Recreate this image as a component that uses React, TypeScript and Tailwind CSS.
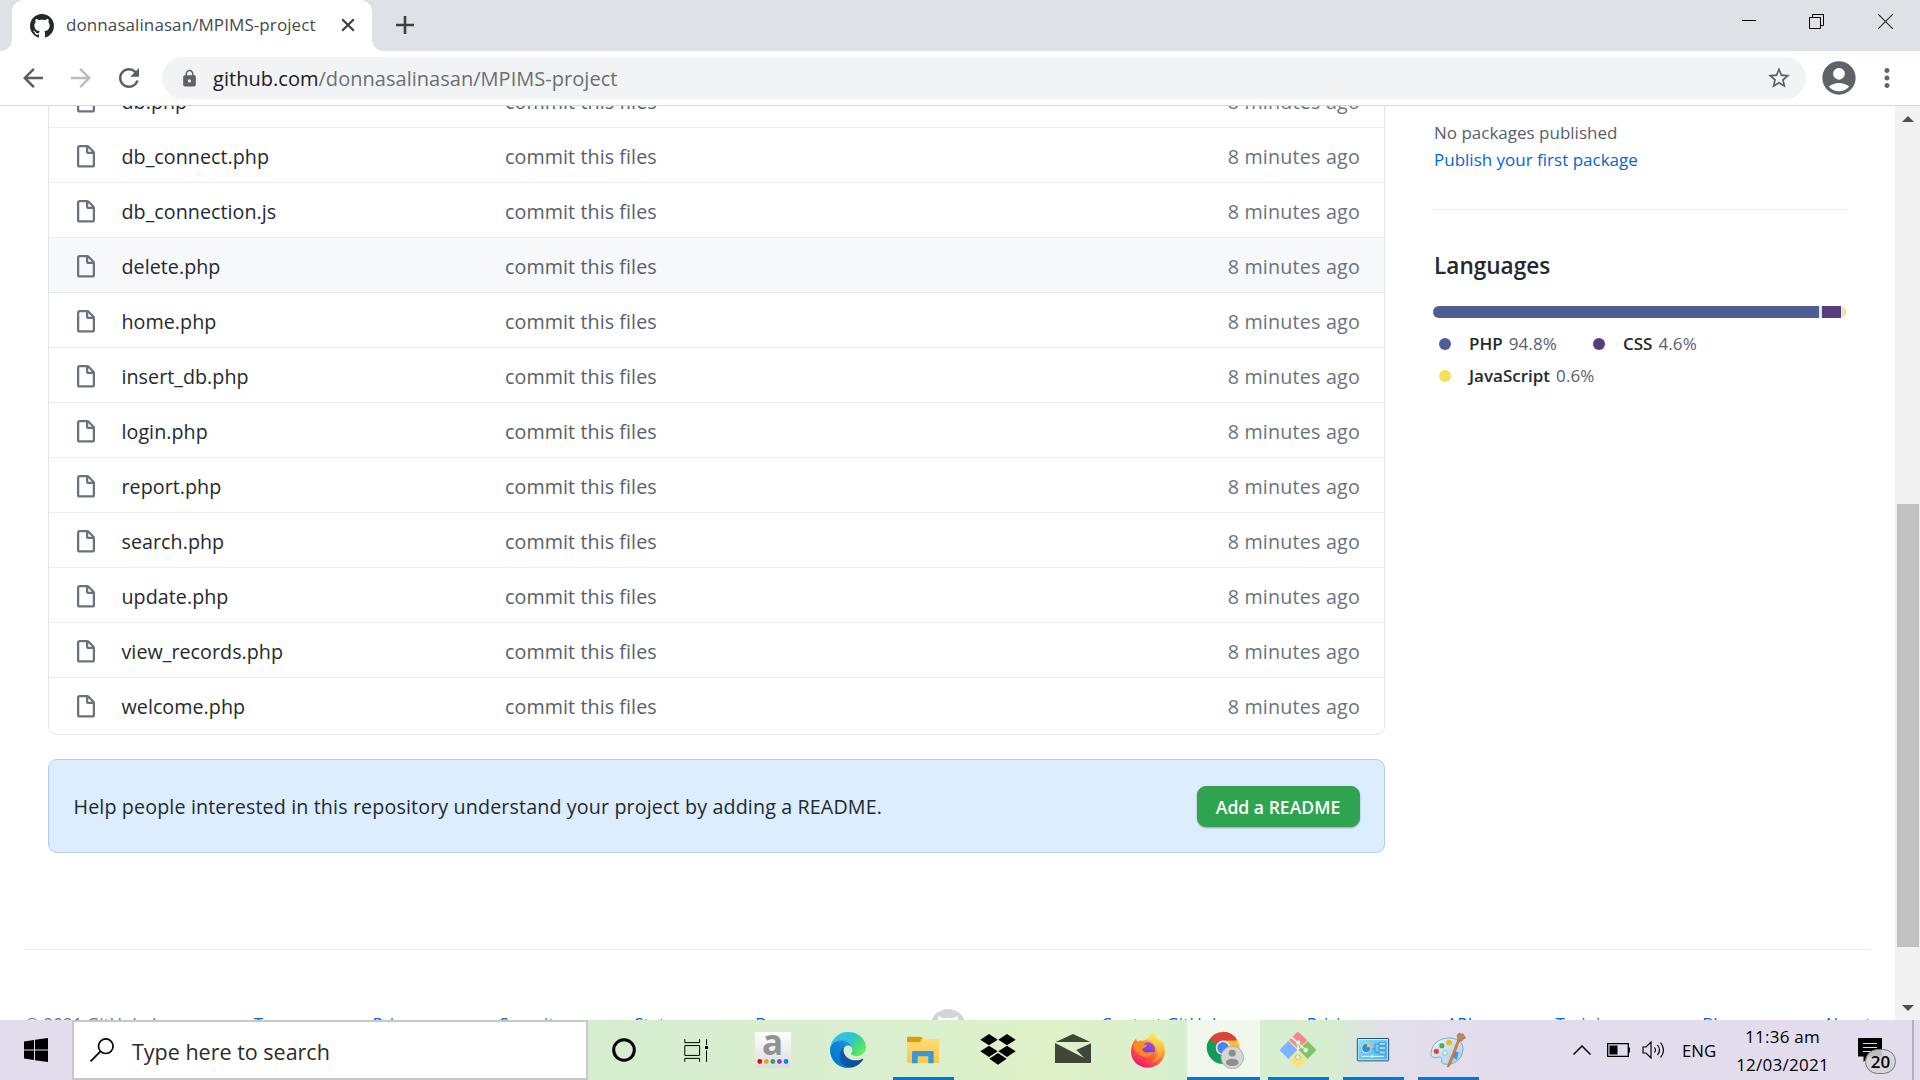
import React from "react";
import { MdArrowBack, MdArrowForward, MdRefresh, MdLock, MdStarBorder, MdAccountCircle, MdMoreVert } from "react-icons/md";

const GITHUB_MARK =
  "M8 0C3.58 0 0 3.58 0 8c0 3.54 2.29 6.53 5.47 7.59.4.07.55-.17.55-.38 0-.19-.01-.82-.01-1.49-2.01.37-2.53-.49-2.69-.94-.09-.23-.48-.94-.82-1.13-.28-.15-.68-.52-.01-.53.63-.01 1.08.58 1.23.82.72 1.21 1.87.87 2.33.66.07-.52.28-.87.51-1.07-1.78-.2-3.64-.89-3.64-3.95 0-.87.31-1.59.82-2.15-.08-.2-.36-1.02.08-2.12 0 0 .67-.21 2.2.82.64-.18 1.32-.27 2-.27.68 0 1.36.09 2 .27 1.53-1.04 2.2-.82 2.2-.82.44 1.1.16 1.92.08 2.12.51.56.82 1.27.82 2.15 0 3.07-1.87 3.75-3.65 3.95.29.25.54.73.54 1.48 0 1.07-.01 1.93-.01 2.2 0 .21.15.46.55.38A8.013 8.013 0 0016 8c0-4.42-3.58-8-8-8z";

function GitHubMark({ className }: { className: string }) {
  return (
    <svg viewBox="0 0 16 16" className={className} fill="currentColor">
      <path fillRule="evenodd" d={GITHUB_MARK} />
    </svg>
  );
}

function FileIcon() {
  return (
    <svg viewBox="0 0 16 16" className="mt-1 size-6 shrink-0 text-[#6a737d]" fill="currentColor">
      <path
        fillRule="evenodd"
        d="M3.75 1.5a.25.25 0 00-.25.25v11.5c0 .138.112.25.25.25h8.5a.25.25 0 00.25-.25V6H9.75A1.75 1.75 0 018 4.25V1.5H3.75zm5.75.56v2.19c0 .138.112.25.25.25h2.19L9.5 2.06zM2 1.75C2 .784 2.784 0 3.75 0h5.086c.464 0 .909.184 1.237.513l3.414 3.414c.329.328.513.773.513 1.237v8.086A1.75 1.75 0 0112.25 15h-8.5A1.75 1.75 0 012 13.25V1.75z"
      />
    </svg>
  );
}

function TabStrip() {
  return (
    <div className="flex h-[51px] shrink-0 bg-[#dee1e6]">
      <div className="flex w-3 items-end bg-white">
        <div className="h-full w-full rounded-br-xl bg-[#dee1e6]" />
      </div>
      <div className="flex bg-[#dee1e6]">
        <div className="flex w-[360px] items-center rounded-t-xl bg-white pl-[18px]">
          <GitHubMark className="size-6 shrink-0 text-[#24292e]" />
          <span className="ml-3 w-[275px] pb-0.5 whitespace-nowrap text-[17px] tracking-[0.09px] text-[#45494d]">
            donnasalinasan/MPIMS-project
          </span>
          <svg viewBox="0 0 14 14" className="mb-0.5 size-3.5 shrink-0" stroke="#3c4043" strokeWidth="2.2">
            <path d="M1.2 1.2l11.6 11.6M12.8 1.2L1.2 12.8" />
          </svg>
        </div>
      </div>
      <div className="w-3 bg-white">
        <div className="h-full w-full rounded-bl-xl bg-[#dee1e6]" />
      </div>
      <div className="flex flex-1 items-start">
        <svg viewBox="0 0 18 18" className="mt-4 ml-3 size-[18px]" stroke="#3c4043" strokeWidth="2.6">
          <path d="M9 0v18M0 9h18" />
        </svg>
      </div>
      <div className="flex items-start gap-[53px] pt-3.5 pr-[27px]">
        <svg viewBox="0 0 15 15" className="size-[15px]" stroke="#000" fill="none">
          <path d="M-1 6.5h15" />
        </svg>
        <svg viewBox="0 0 15 15" className="-ml-px size-[15px]" stroke="#000" fill="none">
          <path d="M.5 3.5h11v11H.5zM3.5 3.5v-3h11v11h-3" />
        </svg>
        <svg viewBox="0 0 15 15" className="ml-px size-[15px]" stroke="#222" strokeWidth="1.1" fill="none">
          <path d="M0 0l15 15M15 0L0 15" />
        </svg>
      </div>
    </div>
  );
}

function Toolbar() {
  return (
    <div className="flex h-[55px] shrink-0 items-center border-b border-[#d5d7da] bg-white pl-[18px]">
      <MdArrowBack className="size-[30px] text-[#5a5d61]" />
      <MdArrowForward className="ml-[18px] size-[30px] text-[#bbbdbf]" />
      <MdRefresh className="ml-[18px] size-[30px] text-[#5a5d61]" />
      <div className="ml-[18px] flex h-[42px] w-[1644px] items-center rounded-full bg-[#f1f3f4] pr-3.5 pl-[18px]">
        <MdLock className="size-[19px] text-[#5f6368]" />
        <span className="ml-3.5 flex-1 pt-0.5 text-[20px] tracking-[0.03px] text-[#6b6f73]">
          <span className="text-[#202124]">github.com</span>/donnasalinasan/MPIMS-project
        </span>
        <MdStarBorder className="size-[26px] text-[#5f6368]" />
      </div>
      <MdAccountCircle className="ml-[13px] size-10 text-[#5f6368]" />
      <MdMoreVert className="ml-[13px] size-[30px] text-[#5f6368]" />
    </div>
  );
}

const FILES = [
  "db.php",
  "db_connect.php",
  "db_connection.js",
  "delete.php",
  "home.php",
  "insert_db.php",
  "login.php",
  "report.php",
  "search.php",
  "update.php",
  "view_records.php",
  "welcome.php",
];

function FileTable() {
  return (
    <div className="-mt-[35px] h-[664px] overflow-hidden rounded-b-[9px] border border-[#e1e4e8] bg-white">
      {FILES.map((name) => (
        <div
          key={name}
          className={
            "flex h-[55px] items-center border-t border-[#eaecef] pr-6 pl-[25px] text-[19.7px] " +
            (name === "delete.php" ? "bg-[#f6f8fa]" : "bg-white")
          }
        >
          <FileIcon />
          <span className="ml-[23.5px] w-[383.5px] pt-1 tracking-[0.04px] text-[#24292e]">{name}</span>
          <span className="flex-1 pt-1 tracking-[0.08px] text-[#586069]">commit this files</span>
          <span className="pt-1 tracking-[0.2px] text-[#6a737d]">8 minutes ago</span>
        </div>
      ))}
    </div>
  );
}

function ReadmeBanner() {
  return (
    <div className="mt-6 flex h-[94px] items-center justify-between rounded-[9px] border border-[#b0cdea] bg-[#dbedff] pr-6 pl-[24.5px]">
      <span className="pt-0.5 text-[19.7px] tracking-[0.13px] text-[#24292e]">
        Help people interested in this repository understand your project by adding a README.
      </span>
      <button className="mt-px flex h-[41px] w-[163px] items-center justify-center rounded-[9px] border border-[#3c9a58] bg-[#2ea44f] pt-px pr-px text-[17.6px] font-semibold whitespace-nowrap text-white shadow-[0_1px_2px_rgba(27,31,35,0.35)]">
        Add a README
      </button>
    </div>
  );
}

function LanguageItem({ dot, name, share, className }: { dot: string; name: string; share: string; className: string }) {
  return (
    <li className={"flex items-center " + className}>
      <span className={"mr-[18px] size-3 rounded-full " + dot} />
      <span className="font-semibold text-[#24292e]">{name}</span>
      <span className="ml-1.5 tracking-[0.1px] text-[#586069]">{share}</span>
    </li>
  );
}

function Sidebar() {
  return (
    <aside className="ml-12 w-[413px] pt-[13px] text-[17px]">
      <p className="h-[27px] pl-px leading-[27px] text-[#586069]">No packages published</p>
      <p className="h-[27px] pl-px leading-[27px] text-[#0366d6]">Publish your first package</p>
      <hr className="mt-9 border-[#eaecef]" />
      <h2 className="mt-[38px] pl-px text-[22.6px] leading-9 font-semibold text-[#24292e]">Languages</h2>
      <div className="mt-[22px] flex h-3 gap-[3px] overflow-hidden rounded-full bg-[#e6e8f0]">
        <div className="w-[386px] bg-[#4f5d95]" />
        <div className="w-[19px] bg-[#563d7c]" />
        <div className="flex-1 bg-[#f1e05a]" />
      </div>
      <ul className="mt-[9px] flex flex-wrap pl-1.5">
        <LanguageItem className="h-[33px] w-[154px]" dot="bg-[#4f5d95]" name="PHP" share="94.8%" />
        <LanguageItem className="h-[33px]" dot="bg-[#563d7c]" name="CSS" share="4.6%" />
        <LanguageItem className="h-8 w-full" dot="bg-[#f1e05a]" name="JavaScript" share="0.6%" />
      </ul>
    </aside>
  );
}

function Footer() {
  return (
    <footer className="mr-6 ml-6 border-t border-[#eaecef]">
      <div className="flex h-[110px] items-start pt-[60px] pl-px text-[17px] leading-7 whitespace-nowrap text-[#0366d6]">
        <span className="w-[229px]">
          <span className="text-[#6a737d]">© 2021 GitHub, Inc.</span>
        </span>
        <span className="w-[119px]">Terms</span>
        <span className="w-[127px]">Privacy</span>
        <span className="w-[135px]">Security</span>
        <span className="w-[121px]">Status</span>
        <span className="w-[175px]">Docs</span>
        <GitHubMark className="-mt-px mr-[135px] h-9 w-9 shrink-0 text-[#d1d5da]" />
        <span className="w-[206px]">Contact GitHub</span>
        <span className="w-[140px]">Pricing</span>
        <span className="w-[109px]">API</span>
        <span className="w-[147px]">Training</span>
        <span className="w-[121px]">Blog</span>
        <span>About</span>
      </div>
    </footer>
  );
}

function Scrollbar() {
  return (
    <div className="flex w-[25px] shrink-0 flex-col items-center bg-[#f1f1f1] pl-px">
      <svg viewBox="0 0 12 6" className="mt-2.5 mr-px h-1.5 w-3" fill="#505050">
        <path d="M6 0l6 6H0z" />
      </svg>
      <div className="mt-[382px] h-[443px] w-[22px] bg-[#c1c1c1]" />
      <svg viewBox="0 0 12 6" className="mt-[58px] mr-px h-1.5 w-3" fill="#505050">
        <path d="M6 6l6-6H0z" />
      </svg>
    </div>
  );
}

function WindowsLogo() {
  return (
    <svg viewBox="0 0 24 24" className="size-6">
      <path d="M0 3.6L10 2v9.5H0zM11 1.8L24 0v11.5H11zM0 12.5h10V22L0 20.6zM11 12.5h13V24L11 22.2z" />
    </svg>
  );
}

function CortanaIcon() {
  return (
    <svg viewBox="0 0 24 24" className="size-6" fill="none" stroke="#000">
      <circle cx="12" cy="12" r="10.3" strokeWidth="3" />
    </svg>
  );
}

function TaskViewIcon() {
  return (
    <svg viewBox="311 144 73 69" className="h-[23px] w-6" fill="none" stroke="#000" strokeWidth="3">
      <path d="M313.500 144v10.500h45V144M313.500 163.500h45v30h-45zM313.500 213v-10.500h45V213M379.500 144v18M379.500 178v35" />
      <path d="M375 165h9v9h-9z" fill="#000" stroke="none" />
    </svg>
  );
}

function AlexaStoreIcon() {
  return (
    <div className="flex size-9 flex-col items-center bg-linear-to-b from-white to-[#dcdcdc]">
      <span className="h-[26px] text-[35px] leading-[19px] font-bold text-[#929292]">a</span>
      <svg viewBox="0 0 36 6" className="h-1.5 w-9">
        <circle cx="4.800" cy="3.500" r="2.400" fill="#f00008" />
        <circle cx="11.300" cy="3.500" r="2.400" fill="#f89a1c" />
        <circle cx="17.900" cy="3.500" r="2.400" fill="#22a95c" />
        <circle cx="24.400" cy="3.500" r="2.400" fill="#9a35dc" />
        <circle cx="31" cy="3.500" r="2.400" fill="#0a84e8" />
      </svg>
    </div>
  );
}

function EdgeIcon() {
  return (
    <svg viewBox="4.600 4.900 256 256" className="size-9">
      <defs>
        <linearGradient id="edgeDark" x1="0.200" y1="0.500" x2="1" y2="0.500">
          <stop offset="0" stopColor="#0c59a4" />
          <stop offset="1" stopColor="#114a8b" />
        </linearGradient>
        <linearGradient id="edgeBlue" x1="0.900" y1="0.200" x2="0.300" y2="0.900">
          <stop offset="0" stopColor="#1b9de2" />
          <stop offset="0.400" stopColor="#1384d4" />
          <stop offset="1" stopColor="#0078d7" />
        </linearGradient>
        <linearGradient id="edgeGreen" x1="0" y1="0.200" x2="1" y2="0.700">
          <stop offset="0" stopColor="#35c1f1" />
          <stop offset="0.500" stopColor="#2cc3d2" />
          <stop offset="0.800" stopColor="#4ade72" />
          <stop offset="1" stopColor="#66eb6e" />
        </linearGradient>
      </defs>
      <path
        fill="url(#edgeDark)"
        d="M235.680 195.460a93.730 93.730 0 0 1-10.540 4.710 101.870 101.870 0 0 1-35.900 6.460c-47.320 0-88.540-32.550-88.540-74.320A31.480 31.480 0 0 1 117.130 105c-42.800 1.800-53.800 46.400-53.800 72.530 0 73.880 68.090 81.370 82.760 81.370 7.910 0 19.840-2.300 27-4.560l1.310-.44a128.340 128.340 0 0 0 66.600-52.800 4 4 0 0 0-5.320-5.640Z"
      />
      <path
        fill="url(#edgeBlue)"
        d="M110.340 246.340A79.200 79.200 0 0 1 87.600 225a80.720 80.720 0 0 1 29.530-120c3.120-1.470 8.450-4.130 15.540-4a32.350 32.350 0 0 1 25.690 13 31.880 31.880 0 0 1 6.360 18.660c0-.21 24.460-79.600-80-79.600-43.900 0-80 41.660-80 78.210a130.150 130.150 0 0 0 12.110 56 128 128 0 0 0 156.380 67.110 75.550 75.550 0 0 1-62.780-8Z"
      />
      <path
        fill="url(#edgeGreen)"
        d="M156.940 153.780c-.81 1.050-3.300 2.500-3.300 5.660 0 2.610 1.700 5.120 4.720 7.230 14.380 10 41.490 8.680 41.560 8.680A59.560 59.560 0 0 0 230.190 167a61.380 61.380 0 0 0 30.430-52.880c.26-22.410-8-37.310-11.340-43.910C228.080 28.760 182.350 4.920 132.610 4.920a128 128 0 0 0-128 126.200c.48-36.540 36.800-66.050 80-66.050 3.500 0 23.460.34 42 10.070 16.340 8.580 24.900 18.940 30.850 29.210 6.180 10.670 7.280 24.150 7.280 29.520s-2.740 13.330-7.800 19.910Z"
      />
    </svg>
  );
}

function FolderIcon() {
  return (
    <svg viewBox="975 126 108 108" className="size-9">
      <defs>
        <linearGradient id="folder" x1="0" y1="0" x2="0" y2="1">
          <stop offset="0" stopColor="#ffdb75" />
          <stop offset="1" stopColor="#fdc748" />
        </linearGradient>
      </defs>
      <path d="M981 143q0-3 3-3h36q3 0 6 3l5 5h-8v15h-42z" fill="#df9c07" />
      <path d="M981 156h36q5 0 9-5 3-4 7-4h41q3 0 3 3v66q0 3-3 3h-90q-3 0-3-3z" fill="url(#folder)" />
      <path d="M996 220v-33q0-4 4-4h57q4 0 4 4v33h-16v-18q0-3-3-3h-26q-3 0-3 3v18z" fill="#3c96dc" />
    </svg>
  );
}

function DropboxIcon() {
  return (
    <svg viewBox="1200 126 108 108" className="size-9">
      <path d="M1227 132l26 17-26 17-26-17zM1281 132l26 17-26 17-26-17zM1227 167l26 17-26 17-26-17zM1281 167l26 17-26 17-26-17zM1254 189l26 17-26 18-26-18z" />
    </svg>
  );
}

function MailIcon() {
  return (
    <svg viewBox="45 126 108 108" className="size-9" fill="#40463a">
      <path d="M47 156l52-24 52 24z" />
      <path d="M45 159l88 45-24-24 44-20v59H45z" />
    </svg>
  );
}

function FirefoxIcon() {
  return (
    <svg viewBox="270 124 108 108" className="size-9">
      <defs>
        <linearGradient id="fox" x1="0.850" y1="0.100" x2="0.300" y2="1">
          <stop offset="0" stopColor="#fff44f" />
          <stop offset="0.300" stopColor="#ffb02a" />
          <stop offset="0.550" stopColor="#ff6a36" />
          <stop offset="0.800" stopColor="#ff3750" />
          <stop offset="1" stopColor="#e3127e" />
        </linearGradient>
        <linearGradient id="foxGlobe" x1="0.700" y1="0" x2="0.300" y2="1">
          <stop offset="0" stopColor="#a04be8" />
          <stop offset="1" stopColor="#5a3fd0" />
        </linearGradient>
        <linearGradient id="foxTail" x1="0.500" y1="0" x2="0.500" y2="1">
          <stop offset="0" stopColor="#fff04c" />
          <stop offset="1" stopColor="#ff9640" />
        </linearGradient>
      </defs>
      <path d="M288 144q2 6 5 9 8-5 18-3 7-4 14-4 2-12 15-22 2 12 10 18 4 4 6 8l8-2q11 16 11 34c-1 28-23 49-51 49s-51-21-51-48c0-15 5-29 15-39z" fill="url(#fox)" />
      <path d="M325 146q2-12 15-22 2 12 12 20 24 22 13 50-10 20-30 22 22-16 16-38-6-22-26-32z" fill="url(#foxTail)" opacity="0.800" />
      <circle cx="324" cy="176" r="21" fill="url(#foxGlobe)" />
      <path d="M282 160q8-9 20-6l8-3q-2 6 0 9l12 4q-2 6-12 9-4 3-2 7 8 8 22 5 8-2 12 1-8 11-20 12-24 0-36-18-4-8-4-16z" fill="#ff8a24" />
    </svg>
  );
}

function ChromeIcon() {
  return (
    <svg viewBox="492 128 123 118" className="ml-0.5 h-[39px] w-[41px]">
      <path d="M549 179L507 156A48 48 0 0 1 591 156z" fill="#db4437" />
      <path d="M549 179L507 154A49 49 0 0 0 549 228L562 200z" fill="#0f9d58" />
      <path d="M549 157h45A49 49 0 0 1 549 228l20-34z" fill="#fbc02d" />
      <path d="M549 130a49 49 0 0 1 43 26h-43z" fill="#db4437" />
      <circle cx="549" cy="179" r="22" fill="#f4f4f4" />
      <circle cx="549" cy="179" r="17.500" fill="#4285f4" />
      <circle cx="577" cy="208" r="34" fill="#d6d6d6" stroke="#a8a8a8" strokeWidth="2.500" />
      <circle cx="577" cy="195" r="10.500" fill="#8d8d8d" />
      <ellipse cx="577" cy="223" rx="19" ry="11" fill="#8d8d8d" />
    </svg>
  );
}

function GitIcon() {
  return (
    <svg viewBox="720 126 108 108" className="size-9">
      <path d="M769 128q5-4 9 0l24 23-27 26-28-26z" fill="#f8868a" />
      <path d="M803 153l23 23q4 4 0 8l-23 23-27-27z" fill="#80c564" />
      <path d="M745 153l-23 23q-4 4 0 8l23 23 27-27z" fill="#80b3ff" />
      <path d="M747 209l27-26 28 26-24 23q-4 4-9 0z" fill="#ffe27e" />
      <path d="M751 139l23 20v42M774 160l22 20" stroke="#e4eedb" strokeWidth="6" fill="none" />
      <g fill="#e4eedb" stroke="#8fa08a" strokeWidth="1.500">
        <circle cx="774" cy="158" r="8" />
        <circle cx="797" cy="180" r="8" />
        <circle cx="774" cy="202" r="8" />
      </g>
    </svg>
  );
}

function ControlPanelIcon() {
  return (
    <svg viewBox="945 126 108 108" className="size-9">
      <defs>
        <linearGradient id="panel" x1="0" y1="0" x2="1" y2="1">
          <stop offset="0" stopColor="#8ed9fb" />
          <stop offset="1" stopColor="#45b4f0" />
        </linearGradient>
      </defs>
      <rect x="952" y="145.500" width="94" height="67" rx="2" fill="#c9ecfc" stroke="#23566f" strokeWidth="3" />
      <rect x="956" y="150" width="86" height="58" fill="url(#panel)" />
      <circle cx="979" cy="174" r="14" fill="#2b8fd2" stroke="#e8f8ff" strokeWidth="2.500" />
      <path d="M981 172v-14a14 14 0 0 1 14 14z" fill="#ffc04a" />
      <path d="M996 177h9v-15h12M1005 177v10h12" stroke="#2a82b5" strokeWidth="2" fill="none" />
      <g fill="#9adcfa" stroke="#2a82b5" strokeWidth="2">
        <path d="M1017 157h20v9h-20zM1017 170h20v9h-20zM1017 183h20v9h-20z" />
      </g>
      <path d="M965 199h27M1002 199h30" stroke="#e9faff" strokeWidth="3" />
      <circle cx="997" cy="199" r="4" fill="#fff" />
    </svg>
  );
}

function PaintIcon() {
  return (
    <svg viewBox="1170 126 108 108" className="size-9">
      <defs>
        <linearGradient id="palette" x1="0" y1="0" x2="1" y2="1">
          <stop offset="0" stopColor="#e8f6fd" />
          <stop offset="1" stopColor="#a5cbe8" />
        </linearGradient>
      </defs>
      <path
        d="M1173 190c0-26 24-46 54-46 24 0 42 12 42 33 0 26-22 46-48 46-14 0-18-6-16-13 2-8-5-10-13-8-10 3-19 0-19-12z"
        fill="url(#palette)"
        stroke="#6f9fc4"
        strokeWidth="2.500"
      />
      <circle cx="1215" cy="189" r="7" fill="#e2eee8" stroke="#86aecb" strokeWidth="2" />
      <circle cx="1189" cy="184" r="8" fill="#e0453c" />
      <rect x="1198" y="160" width="15" height="15" rx="5" fill="#4cae45" />
      <rect x="1219" y="150" width="17" height="16" rx="5" fill="#f9b31e" />
      <path d="M1242 183l14 4-5 22-12-6z" fill="#3e9be0" />
      <path d="M1259 152l-28 72q-4 8-9 7l5-14 26-67z" fill="#e5842a" stroke="#a9561a" strokeWidth="1.500" />
      <path d="M1251 136l6-7q7 4 12 2l8 14q-8 0-12 9l-11-5z" fill="#b98a5c" stroke="#8e6440" strokeWidth="1.500" />
    </svg>
  );
}

const APPS: { id: string; icon: React.ReactElement; running?: boolean; active?: boolean }[] = [
  { id: "alexa", icon: <AlexaStoreIcon /> },
  { id: "edge", icon: <EdgeIcon /> },
  { id: "explorer", icon: <FolderIcon />, running: true },
  { id: "dropbox", icon: <DropboxIcon /> },
  { id: "mail", icon: <MailIcon /> },
  { id: "firefox", icon: <FirefoxIcon /> },
  { id: "chrome", icon: <ChromeIcon />, active: true },
  { id: "git", icon: <GitIcon />, running: true },
  { id: "panel", icon: <ControlPanelIcon />, running: true },
  { id: "paint", icon: <PaintIcon />, running: true },
];

function Taskbar() {
  return (
    <div className="flex h-[60px] shrink-0 bg-[linear-gradient(90deg,#e3dcec_0px,#e3dcec_72px,#d7edd0_588px,#d9efce_900px,#dff1c7_1050px,#d8efcf_1180px,#d6edd0_1335px,#e2deeb_1385px,#e3dcec_1500px)]">
      <div className="flex w-[72px] items-center pl-6">
        <WindowsLogo />
      </div>
      <div className="flex w-[516px] items-center border-2 border-[#c8c8c8] bg-white pl-4">
        <svg viewBox="0 0 24 24" className="size-6" fill="none" stroke="#000" strokeWidth="1.700">
          <circle cx="15.800" cy="8.200" r="7.300" />
          <path d="M10.400 13.400L.6 23.400" />
        </svg>
        <span className="ml-[18px] pt-1 text-[21.500px] text-[#2b2b2b]">Type here to search</span>
      </div>
      <div className="flex w-[72px] items-center justify-center">
        <CortanaIcon />
      </div>
      <div className="mr-[3px] flex w-[72px] items-center justify-center">
        <TaskViewIcon />
      </div>
      {APPS.map((app) => (
        <div key={app.id} className="flex w-[75px] flex-col items-center px-px">
          <div className={"flex w-full flex-1 items-center justify-center pt-[3px] " + (app.active ? "ml-px bg-[#f0f8ed]" : "")}>
            {app.icon}
          </div>
          <div className={"h-[3px] " + (app.active ? "ml-px w-full bg-[#0078d7]" : app.running ? "ml-px w-[61px] bg-[#0078d7]" : "w-full")} />
        </div>
      ))}
      <div className="flex flex-1 items-center pl-[88px]">
        <svg viewBox="0 0 18 10" className="h-2.5 w-[18px]" fill="none" stroke="#000" strokeWidth="1.500">
          <path d="M.5 9.500L9 1l8.500 8.500" />
        </svg>
        <svg viewBox="0 0 23 14" className="ml-4 h-3.5 w-[23px]" fill="none" stroke="#000" strokeWidth="1.300">
          <path d="M.7.7h20.600v12.600H.7z" />
          <path d="M2.500 2.500h8v9h-8zM21.500 4.500h1.500v5h-1.500z" fill="#000" stroke="none" />
        </svg>
        <svg viewBox="0 0 24 18" className="ml-3 h-[18px] w-6" fill="none" stroke="#000" strokeWidth="1.200">
          <path d="M1 6h3l5-5v16l-5-5H1zM12.500 6.500q2 2.500 0 5M15.500 4q4 5 0 10M18.500 1.500q6 7.500 0 15" />
        </svg>
        <span className="ml-4 w-[54px] pt-px text-[16.800px] text-black">ENG</span>
        <div className="w-[93px] pt-px text-center text-[17px] leading-7 tracking-[0.25px] whitespace-nowrap text-black">
          <div>11:36 am</div>
          <div>12/03/2021</div>
        </div>
        <div className="relative ml-[29px] h-6 w-6">
          <svg viewBox="0 0 24 24" className="size-6">
            <path d="M0 0h24v18.500H11L5.500 24v-5.500H0z" />
            <path d="M5 5.500h14M5 9.500h14M5 13.500h8" stroke="#e3dcec" strokeWidth="1.100" />
          </svg>
          <span className="absolute top-[11px] left-[7px] flex h-[25px] w-[31px] items-center justify-center rounded-full border border-[#777] bg-[#d5d3d8]/90 text-[17px] font-semibold text-black">
            20
          </span>
        </div>
      </div>
      <div className="w-2 border-l-2 border-[#b5afbd]" />
    </div>
  );
}

export default function App() {
  return (
    <div className="flex h-[1080px] w-[1920px] flex-col overflow-hidden bg-white font-['Open_Sans',sans-serif]">
      <TabStrip />
      <Toolbar />
      <div className="flex min-h-0 flex-1 overflow-hidden">
        <div className="flex-1 overflow-hidden">
          <div className="flex h-[843px] pl-12">
            <main className="w-[1337px]">
              <FileTable />
              <ReadmeBanner />
            </main>
            <Sidebar />
          </div>
          <Footer />
        </div>
        <Scrollbar />
      </div>
      <Taskbar />
    </div>
  );
}
